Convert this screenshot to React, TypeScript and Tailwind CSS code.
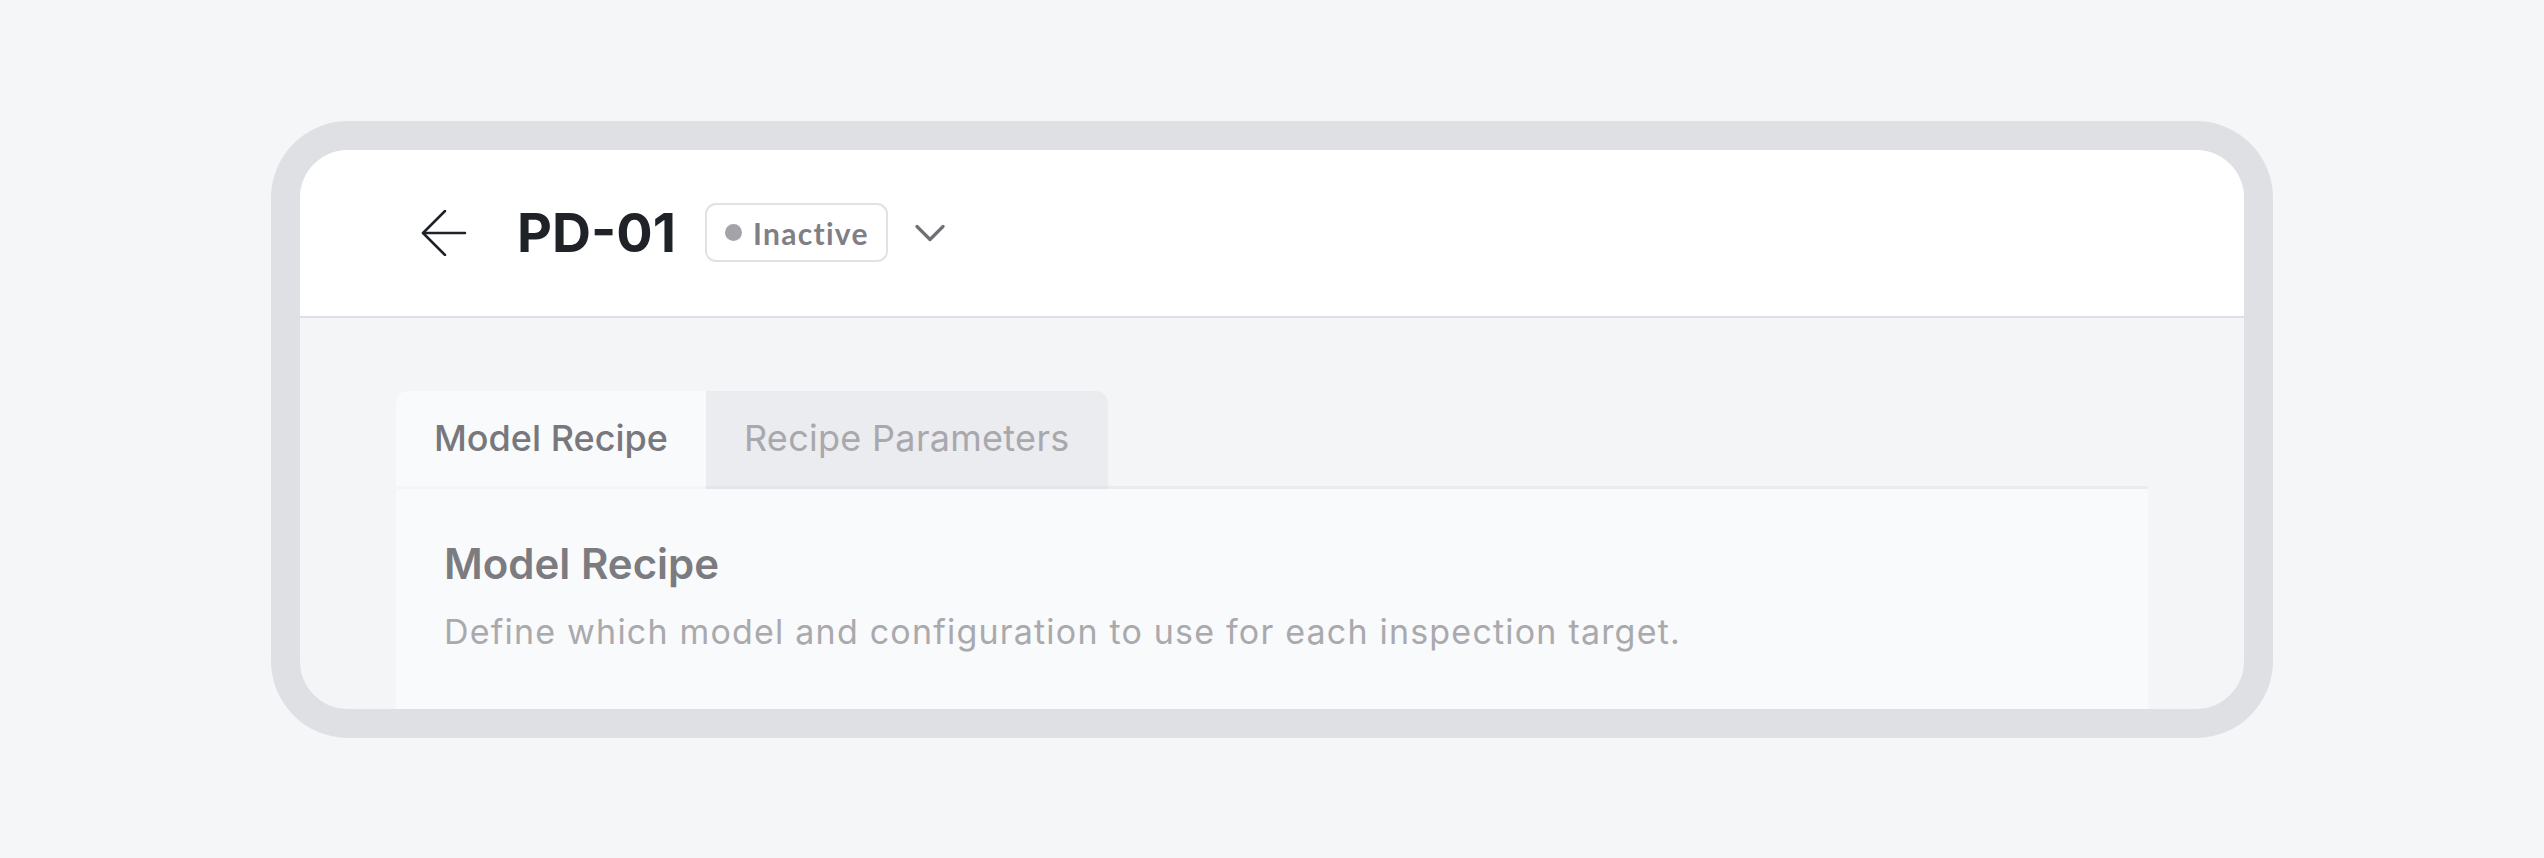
const sans = "font-['Inter','Noto_Sans',sans-serif]"

function BackArrow() {
  return (
    <svg width="46" height="46" viewBox="0 0 46 46" fill="none" stroke="#1f2328" strokeWidth="2.5" strokeLinecap="round" strokeLinejoin="round">
      <path d="M44 23H2" />
      <path d="M24 1 2 23l22 22" />
    </svg>
  )
}

function Chevron() {
  return (
    <svg width="30" height="18" viewBox="0 0 30 18" fill="none" stroke="#6f6f74" strokeWidth="3.2" strokeLinecap="round" strokeLinejoin="round">
      <path d="M2 2.5 15 15.5 28 2.5" />
    </svg>
  )
}

function StatusBadge({ label }: { label: string }) {
  return (
    <span className="flex h-[59px] items-center gap-[11px] rounded-[11px] border-2 border-[#dfe2e7] bg-white pl-[18px] pr-[17px]">
      <span className="h-[17px] w-[17px] rounded-full bg-[#a3a3a8]" />
      <span className="font-['Lato','Open_Sans',sans-serif] text-[30px] leading-none font-bold tracking-[1.3px] text-[#7f7f85]">{label}</span>
    </span>
  )
}

export default function App() {
  return (
    <div className={`flex h-[858px] w-full items-center justify-center bg-[#f5f6f8] ${sans}`}>
      <div className="h-[617px] w-[2002px] overflow-hidden rounded-[77px] border-[29px] border-[#dee0e4] bg-[#f4f5f7]">
        <header className="flex h-[168px] items-center border-b-2 border-[#dde0e4] bg-white pl-[121px]">
          <BackArrow />
          <h1 className="ml-[50px] text-[54px] leading-none font-bold text-[#1f2328]">PD-01</h1>
          <div className="ml-[29px]">
            <StatusBadge label="Inactive" />
          </div>
          <div className="ml-[27px]">
            <Chevron />
          </div>
        </header>

        <section className="px-[96px] pt-[73px]">
          <div className="flex h-[98px]">
            <button className="h-[95px] rounded-tl-[12px] bg-[#f9fafb] px-[38px] text-[36px] leading-none font-medium text-[#77777c]">
              Model Recipe
            </button>
            <button className="h-[98px] rounded-tr-[12px] border-b-[3px] border-[#e3e5e8] bg-[#ebecef] px-[38px] text-[36px] leading-none tracking-[0.3px] text-[#a8a8ad]">
              Recipe Parameters
            </button>
            <div className="flex-1 border-b-[3px] border-[#eaebee]" />
          </div>
          <div className="h-[300px] bg-[#f9fafb] px-[48px] pt-[54px]">
            <h2 className="text-[42px] leading-none font-semibold text-[#7b7b80]">Model Recipe</h2>
            <p className="mt-[30px] text-[34px] leading-none tracking-[1.2px] text-[#a9a9ae]">
              Define which model and configuration to use for each inspection target.
            </p>
          </div>
        </section>
      </div>
    </div>
  )
}
